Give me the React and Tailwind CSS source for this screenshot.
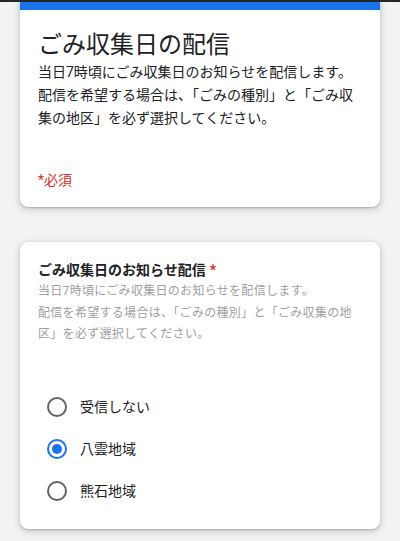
import React from "react";

const FONT = { fontFamily: "Roboto, 'Noto Sans CJK JP', 'Noto Sans', sans-serif" };

function Radio({ label, checked }) {
  return (
    <div className="flex h-[42px] items-center pl-[9px]">
      <span
        className={
          "flex h-5 w-5 items-center justify-center rounded-full border-2 " +
          (checked ? "border-[#1a73e8]" : "border-[#5f6368]")
        }
      >
        {checked && <span className="h-[10px] w-[10px] rounded-full bg-[#1a73e8]" />}
      </span>
      <span className="ml-[13px] text-[14px] leading-5 text-[#202124]">{label}</span>
    </div>
  );
}

export default function App() {
  return (
    <div className="h-[541px] w-full overflow-hidden bg-[#f1f3f4]" style={FONT}>
      <div className="h-[2px] w-full bg-[#262626]" />
      <div className="px-5">
        {/* Header card */}
        <div className="overflow-hidden rounded-b-lg bg-white shadow-[0_1px_2px_0_rgba(60,64,67,0.3),0_2px_6px_2px_rgba(60,64,67,0.15)]">
          <div className="h-2 bg-[#1a73e8]" />
          <div className="px-[18px] pb-[17px] pt-[19px]">
            <h1 className="text-[24px] font-normal leading-8 text-[#202124]">ごみ収集日の配信</h1>
            <div className="text-[14px] leading-[23px] text-[#202124]">
              <p>当日7時頃にごみ収集日のお知らせを配信します。</p>
              <p>配信を希望する場合は、「ごみの種別」と「ごみ収集の地区」を必ず選択してください。</p>
            </div>
            <p className="mt-10 text-[14px] leading-5 text-[#d93025]">*必須</p>
          </div>
        </div>

        {/* Question card */}
        <div className="mt-[35px] rounded-lg bg-white px-[18px] pb-[17px] pt-[18px] shadow-[0_1px_2px_0_rgba(60,64,67,0.3),0_2px_6px_2px_rgba(60,64,67,0.15)]">
          <h2 className="text-[14px] font-bold leading-5 text-[#202124]">
            ごみ収集日のお知らせ配信<span className="ml-1 text-[#d93025]">*</span>
          </h2>
          <div className="mt-px text-[12px] leading-[21.5px] tracking-[0.3px] text-[#a0a0a0]">
            <p>当日7時頃にごみ収集日のお知らせを配信します。</p>
            <p>配信を希望する場合は、「ごみの種別」と「ごみ収集の地区」を必ず選択してください。</p>
          </div>
          <div className="mt-10">
            <Radio label="受信しない" />
            <Radio label="八雲地域" checked />
            <Radio label="熊石地域" />
          </div>
        </div>
      </div>
    </div>
  );
}
